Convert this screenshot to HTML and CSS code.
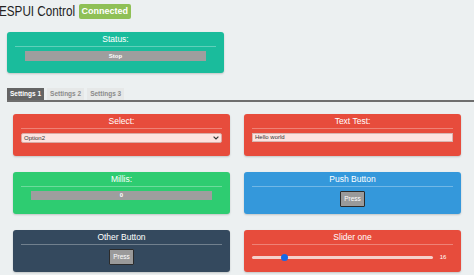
FILE: index.html
```html
<!DOCTYPE html>
<html>
<head>
<meta charset="utf-8">
<link rel="stylesheet" href="styles.css">
</head>
<body>
<header class="topbar">
  <h1 class="title">ESPUI Control</h1>
  <span class="badge">Connected</span>
</header>
<main class="main">
  <section class="card card-status">
    <div class="card-title">Status:</div>
    <hr class="card-rule">
    <div class="bar"><span>Stop</span></div>
  </section>

  <nav class="tabs">
    <span class="tab tab-active">Settings 1</span>
    <span class="tab">Settings 2</span>
    <span class="tab">Settings 3</span>
  </nav>

  <div class="grid">
    <section class="card card-red">
      <div class="card-title">Select:</div>
      <hr class="card-rule">
      <div class="select-wrap">
        <span class="select-text">Option2</span>
        <svg class="chev" width="6" height="4" viewBox="0 0 6 4"><path d="M0.6 0.6 L3 3 L5.4 0.6" fill="none" stroke="#333" stroke-width="1.2"/></svg>
      </div>
    </section>

    <section class="card card-red">
      <div class="card-title">Text Test:</div>
      <hr class="card-rule">
      <div class="text-input">Hello world</div>
    </section>

    <section class="card card-green">
      <div class="card-title">Millis:</div>
      <hr class="card-rule">
      <div class="bar bar-millis"><span>0</span></div>
    </section>

    <section class="card card-blue">
      <div class="card-title">Push Button</div>
      <hr class="card-rule">
      <div class="btn-row"><span class="btn">Press</span></div>
    </section>

    <section class="card card-dark">
      <div class="card-title">Other Button</div>
      <hr class="card-rule">
      <div class="btn-row"><span class="btn">Press</span></div>
    </section>

    <section class="card card-red">
      <div class="card-title">Slider one</div>
      <hr class="card-rule">
      <div class="slider-row">
        <div class="track"><span class="thumb"></span></div>
        <span class="slider-val">16</span>
      </div>
    </section>
  </div>
</main>
</body>
</html>
```
FILE: styles.css
```css
html, body {
  margin: 0;
  padding: 0;
}
body {
  background: #ecf0f1;
  font-family: "Liberation Sans", Arial, sans-serif;
  width: 474px;
  height: 275px;
  overflow: hidden;
}
.topbar {
  display: flex;
  align-items: center;
  height: 20px;
  padding-top: 1px;
}
.title {
  display: inline-block;
  margin: 0 -21px 0 -1px;
  font-size: 15px;
  font-weight: normal;
  color: #222;
  line-height: 18px;
  white-space: nowrap;
  transform: scaleX(0.78);
  transform-origin: 0 50%;
}
.badge {
  margin-left: 3px;
  background: #8fc056;
  color: #fff;
  font-weight: bold;
  font-size: 9px;
  line-height: 15px;
  padding: 0 3px;
  border-radius: 2px;
}
.main {
  margin-top: 11px;
  padding-left: 7px;
}
.card {
  box-sizing: border-box;
  height: 41px;
  border-radius: 3px;
  padding: 2px 8px 0;
  color: #fff;
  box-shadow: 0 1px 2px rgba(0,0,0,0.18);
}
.card-status {
  width: 217px;
  background: #1abc9c;
}
.card-red { background: #e74c3c; }
.card-green { background: #2ecc71; }
.card-blue { background: #3498db; }
.card-dark { background: #34495e; }
.card-title {
  text-align: center;
  font-size: 8.5px;
  line-height: 11px;
  color: #ffffff;
}
.card-rule {
  border: 0;
  height: 1px;
  margin: 1px 0 4px;
  background: rgba(255,255,255,0.3);
}
.bar {
  margin: 0 10px;
  height: 10px;
  background: #9e9e9e;
  text-align: center;
  font-weight: bold;
  font-size: 6px;
  line-height: 10px;
  color: #fff;
}
.bar-millis {
  height: 9px;
  line-height: 9px;
}
.tabs {
  margin-top: 15px;
  display: flex;
  border-bottom: 2px solid #6e6e6e;
  height: 12px;
}
.tab {
  font-weight: bold;
  font-size: 6.5px;
  line-height: 12px;
  padding: 0 3px;
  white-space: nowrap;
  color: #8a8a8a;
  background: #e6e8e8;
  margin-right: 3px;
}
.tab-active {
  background: #646464;
  color: #fff;
}
.grid {
  margin-top: 12px;
  margin-left: 6px;
  display: grid;
  grid-template-columns: 217px 217px;
  column-gap: 14px;
  row-gap: 16px;
  grid-auto-rows: 42px;
}
.grid .card { height: 42px; }
.select-wrap {
  position: relative;
  height: 10px;
  background: #fde3e0;
  border-radius: 2px;
  border: 1px solid #d9aaa5;
  box-sizing: border-box;
  display: flex;
  align-items: center;
  padding-left: 2px;
}
.select-text, .text-input {
  font-size: 6px;
  color: #333;
}
.chev {
  position: absolute;
  right: 2px;
  top: 2px;
}
.text-input {
  margin-top: 2px;
  height: 9px;
  background: #fde3e0;
  border: 1px solid #d8b6b2;
  box-sizing: border-box;
  padding-left: 2px;
  line-height: 7px;
}
.btn-row {
  display: flex;
  justify-content: center;
}
.btn {
  box-sizing: border-box;
  width: 25px;
  height: 16px;
  background: #9a9a9a;
  border: 1.5px solid #2b2b2b;
  border-radius: 1px;
  color: #fff;
  font-size: 6.5px;
  line-height: 13px;
  text-align: center;
}
.slider-row {
  display: flex;
  align-items: center;
  height: 16px;
}
.track {
  position: relative;
  flex: 1;
  height: 3px;
  border-radius: 2px;
  background: #f6d0cb;
}
.thumb {
  position: absolute;
  left: 29px;
  top: -2px;
  width: 7px;
  height: 7px;
  border-radius: 50%;
  background: #1668e8;
}
.slider-val {
  width: 20px;
  text-align: center;
  font-size: 6px;
  color: #fff;
}
```
